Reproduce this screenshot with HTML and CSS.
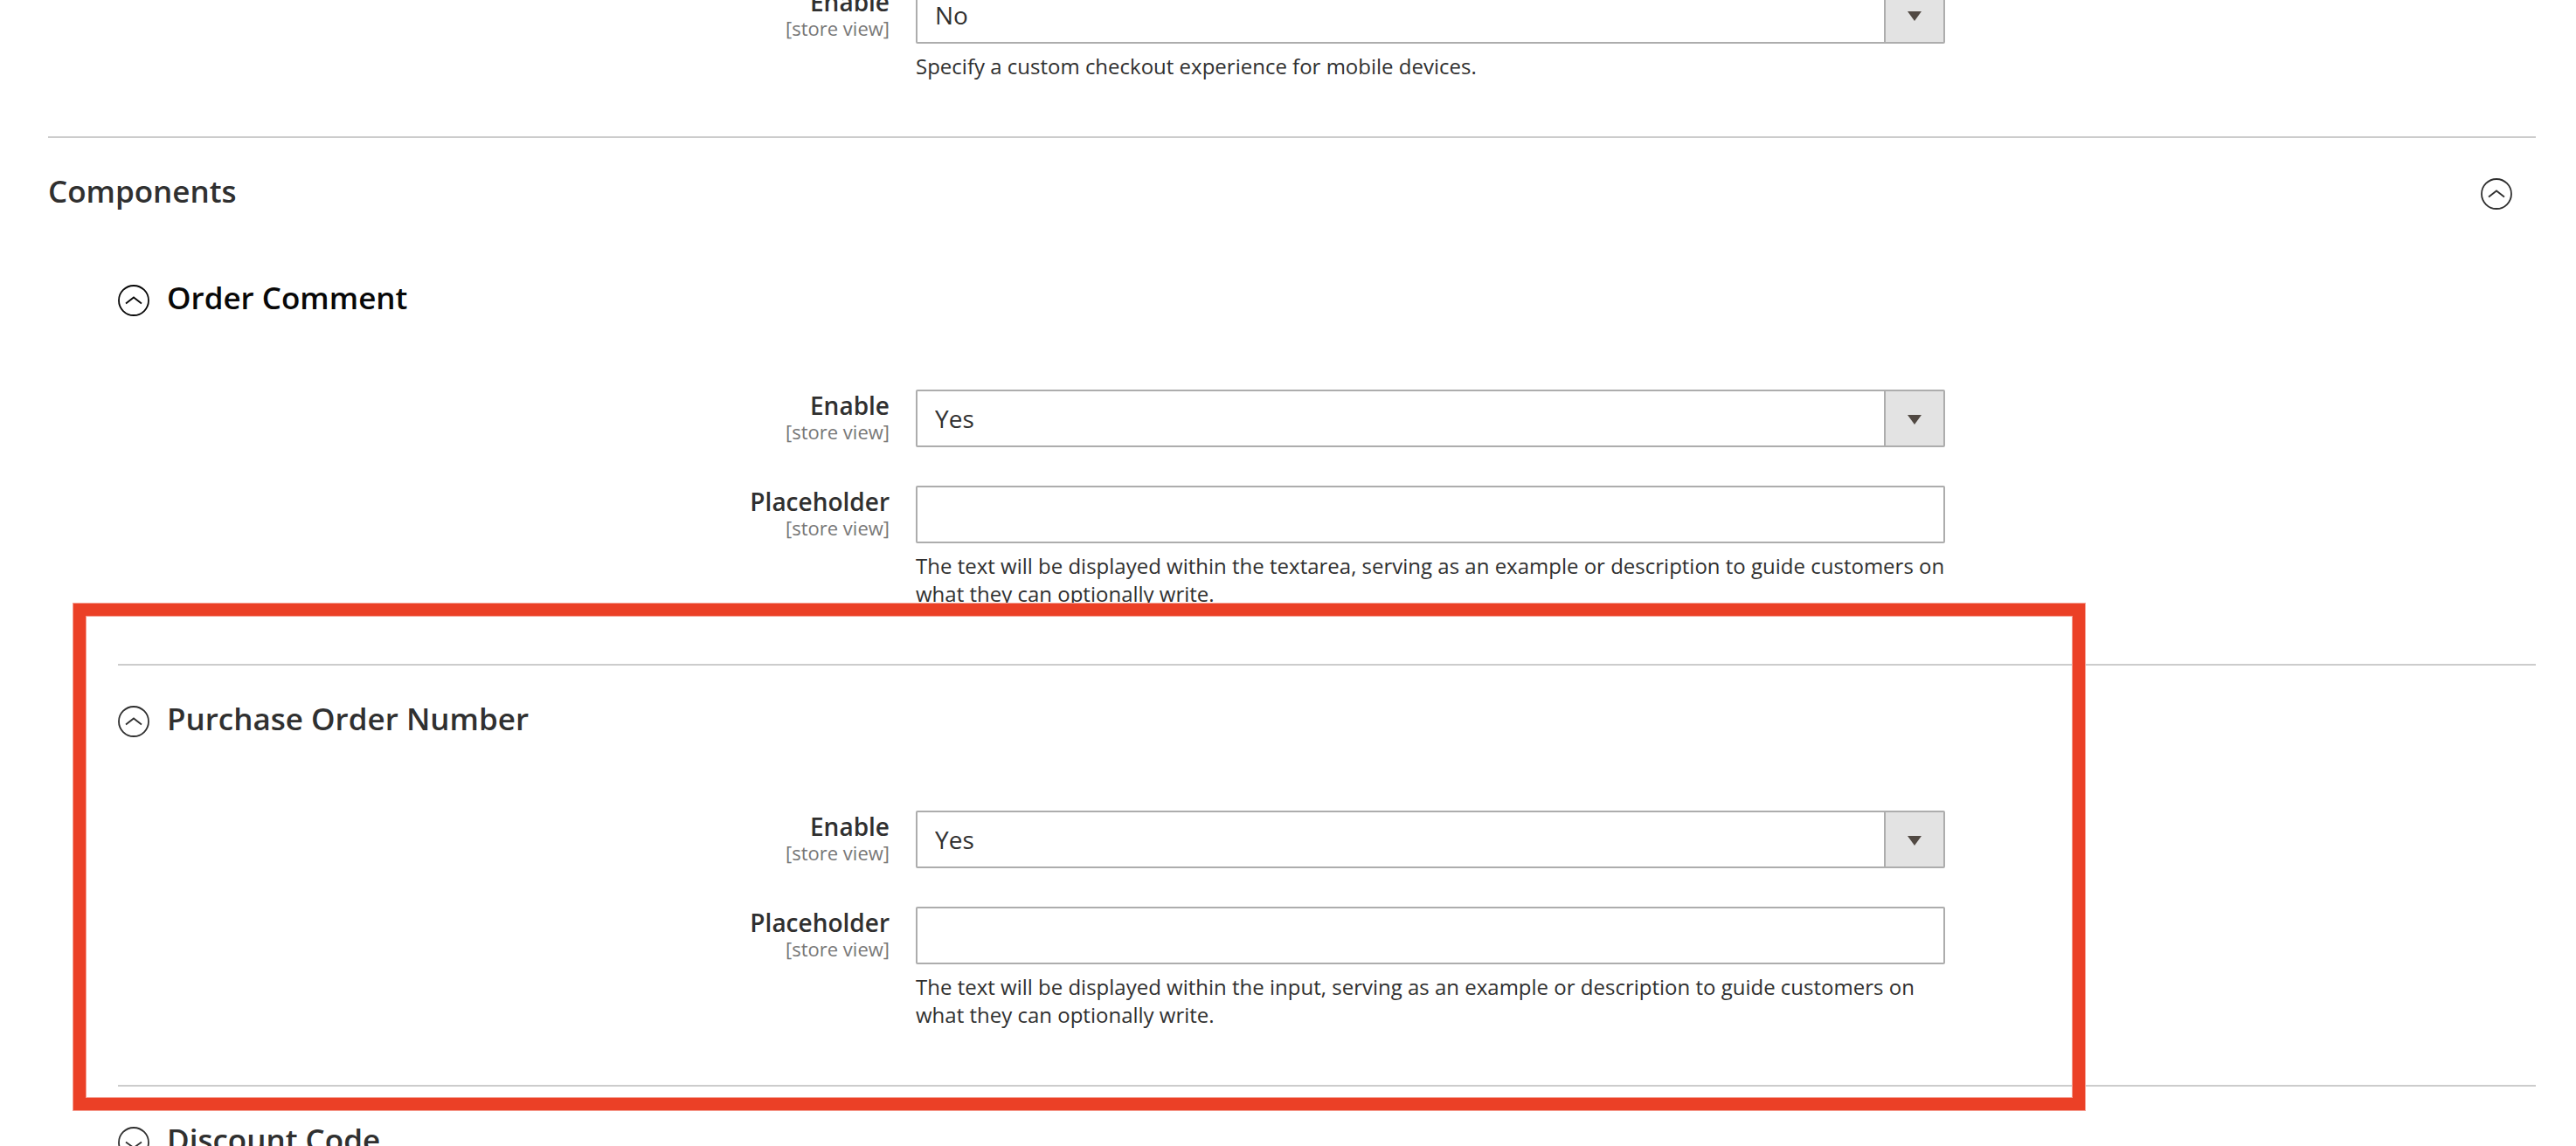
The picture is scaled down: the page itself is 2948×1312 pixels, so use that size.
FILE: index.html
```html
<!DOCTYPE html>
<html lang="en">
<head>
<meta charset="utf-8">
<title>Configuration</title>
<link rel="stylesheet" href="styles.css">
</head>
<body>
<svg class="sprite" aria-hidden="true">
  <symbol id="collapse" viewBox="0 0 36 36"><circle cx="18" cy="18" r="17"/><path d="M9 21.5 18 14.5l9 7"/></symbol>
  <symbol id="expand" viewBox="0 0 36 36"><circle cx="18" cy="18" r="17"/><path d="M9 17.5l9 6.5 9-6.5"/></symbol>
  <symbol id="arrow" viewBox="0 0 16 11"><path d="M0 0h16L8 11z"/></symbol>
</svg>
<main class="config">
  <section class="group">
    <div class="nested">
      <div class="fields">
        <div class="field">
          <label class="label" for="mobile-enable">Enable<span class="scope">[store view]</span></label>
          <div class="value">
            <div class="select">
              <select class="control" id="mobile-enable"><option>No</option><option>Yes</option></select>
              <span class="select-arrow"><svg><use href="#arrow"/></svg></span>
            </div>
            <p class="note">Specify a custom checkout experience for mobile devices.</p>
          </div>
        </div>
      </div>
    </div>
  </section>

  <section class="group">
    <h2 class="title"><button class="toggle toggle-wide" type="button" aria-expanded="true">Components<svg class="icon"><use href="#collapse"/></svg></button></h2>
    <div class="nested">
      <section class="group">
        <h3 class="title"><button class="toggle active" type="button" aria-expanded="true"><svg class="icon"><use href="#collapse"/></svg>Order Comment</button></h3>
        <div class="fields">
          <div class="field">
            <label class="label" for="comment-enable">Enable<span class="scope">[store view]</span></label>
            <div class="value">
              <div class="select">
                <select class="control" id="comment-enable"><option>Yes</option><option>No</option></select>
                <span class="select-arrow"><svg><use href="#arrow"/></svg></span>
              </div>
            </div>
          </div>
          <div class="field">
            <label class="label" for="comment-placeholder">Placeholder<span class="scope">[store view]</span></label>
            <div class="value">
              <input class="control" id="comment-placeholder" type="text">
              <p class="note">The text will be displayed within the textarea, serving as an example or description to guide customers on what they can optionally write.</p>
            </div>
          </div>
        </div>
      </section>

      <section class="group highlighted">
        <h3 class="title"><button class="toggle" type="button" aria-expanded="true"><svg class="icon"><use href="#collapse"/></svg>Purchase Order Number</button></h3>
        <div class="fields">
          <div class="field">
            <label class="label" for="po-enable">Enable<span class="scope">[store view]</span></label>
            <div class="value">
              <div class="select">
                <select class="control" id="po-enable"><option>Yes</option><option>No</option></select>
                <span class="select-arrow"><svg><use href="#arrow"/></svg></span>
              </div>
            </div>
          </div>
          <div class="field">
            <label class="label" for="po-placeholder">Placeholder<span class="scope">[store view]</span></label>
            <div class="value">
              <input class="control" id="po-placeholder" type="text">
              <p class="note">The text will be displayed within the input, serving as an example or description to guide customers on what they can optionally write.</p>
            </div>
          </div>
        </div>
      </section>

      <section class="group">
        <h3 class="title"><button class="toggle" type="button" aria-expanded="false"><svg class="icon"><use href="#expand"/></svg>Discount Code</button></h3>
      </section>
    </div>
  </section>
</main>
</body>
</html>
```
FILE: styles.css
```css
* {
  box-sizing: border-box;
}

html,
body {
  height: 100%;
}

body {
  display: flow-root;
  margin: 0;
  overflow: hidden;
  background: #fff;
  color: #303030;
  font-family: "Open Sans", "Noto Sans", sans-serif;
  font-size: 28px;
}

.sprite {
  display: none;
}

/* The form is scrolled part of the way down. */
.config {
  margin-top: -16px;
  padding: 0 46px 0 55px;
}

.group + .group {
  border-top: 2px solid #ccc;
}

.nested {
  padding-left: 80px;
}

.title {
  margin: 0;
  padding: 39px 0;
  font-size: 35px;
  font-weight: 600;
  line-height: 44px;
}

.toggle {
  display: flex;
  align-items: center;
  gap: 20px;
  padding: 0;
  border: 0;
  background: none;
  color: inherit;
  font: inherit;
  cursor: pointer;
}

.toggle-wide {
  width: 100%;
  justify-content: space-between;
  padding-right: 27px;
}

.nested .title {
  padding-bottom: 83px;
}

.active {
  color: #080808;
}

.icon {
  width: 36px;
  height: 36px;
  margin-top: 6px;
  fill: none;
  stroke: currentColor;
  stroke-width: 1.8;
}

.fields {
  display: grid;
  gap: 44px;
  padding-bottom: 64px;
}

.field {
  display: grid;
  grid-template-columns: 883fr 1178fr 646fr;
  column-gap: 30px;
}

.label {
  font-weight: 600;
  line-height: 36px;
  text-align: right;
}

.scope {
  display: block;
  color: #777;
  font-size: 22px;
  font-weight: 400;
  line-height: 24px;
}

.control {
  display: block;
  width: 100%;
  height: 66px;
  margin: 0;
  padding: 0 20px;
  border: 2px solid #adadad;
  border-radius: 2px;
  background: #fff;
  color: #303030;
  font: inherit;
  appearance: none;
}

.select {
  display: grid;
}

.select > * {
  grid-area: 1 / 1;
}

.select-arrow {
  display: grid;
  place-items: center;
  justify-self: end;
  width: 68px;
  margin: 2px;
  padding-top: 2px;
  border-left: 2px solid #adadad;
  background: #e3e3e3;
  pointer-events: none;
}

.select-arrow svg {
  width: 16px;
  height: 11px;
  fill: #514943;
}

.note {
  margin: 10px 0 0;
  font-size: 24px;
  line-height: 32px;
}

/* Callout frame drawn over the form. */
.highlighted {
  position: relative;
}

.highlighted::after {
  content: "";
  position: absolute;
  top: -71px;
  right: 516px;
  bottom: -29px;
  left: -51px;
  border: 14px solid #eb4026;
  box-shadow: 0 0 0 1px #f59f92, inset 0 0 0 1px #f59f92;
  pointer-events: none;
}
```
